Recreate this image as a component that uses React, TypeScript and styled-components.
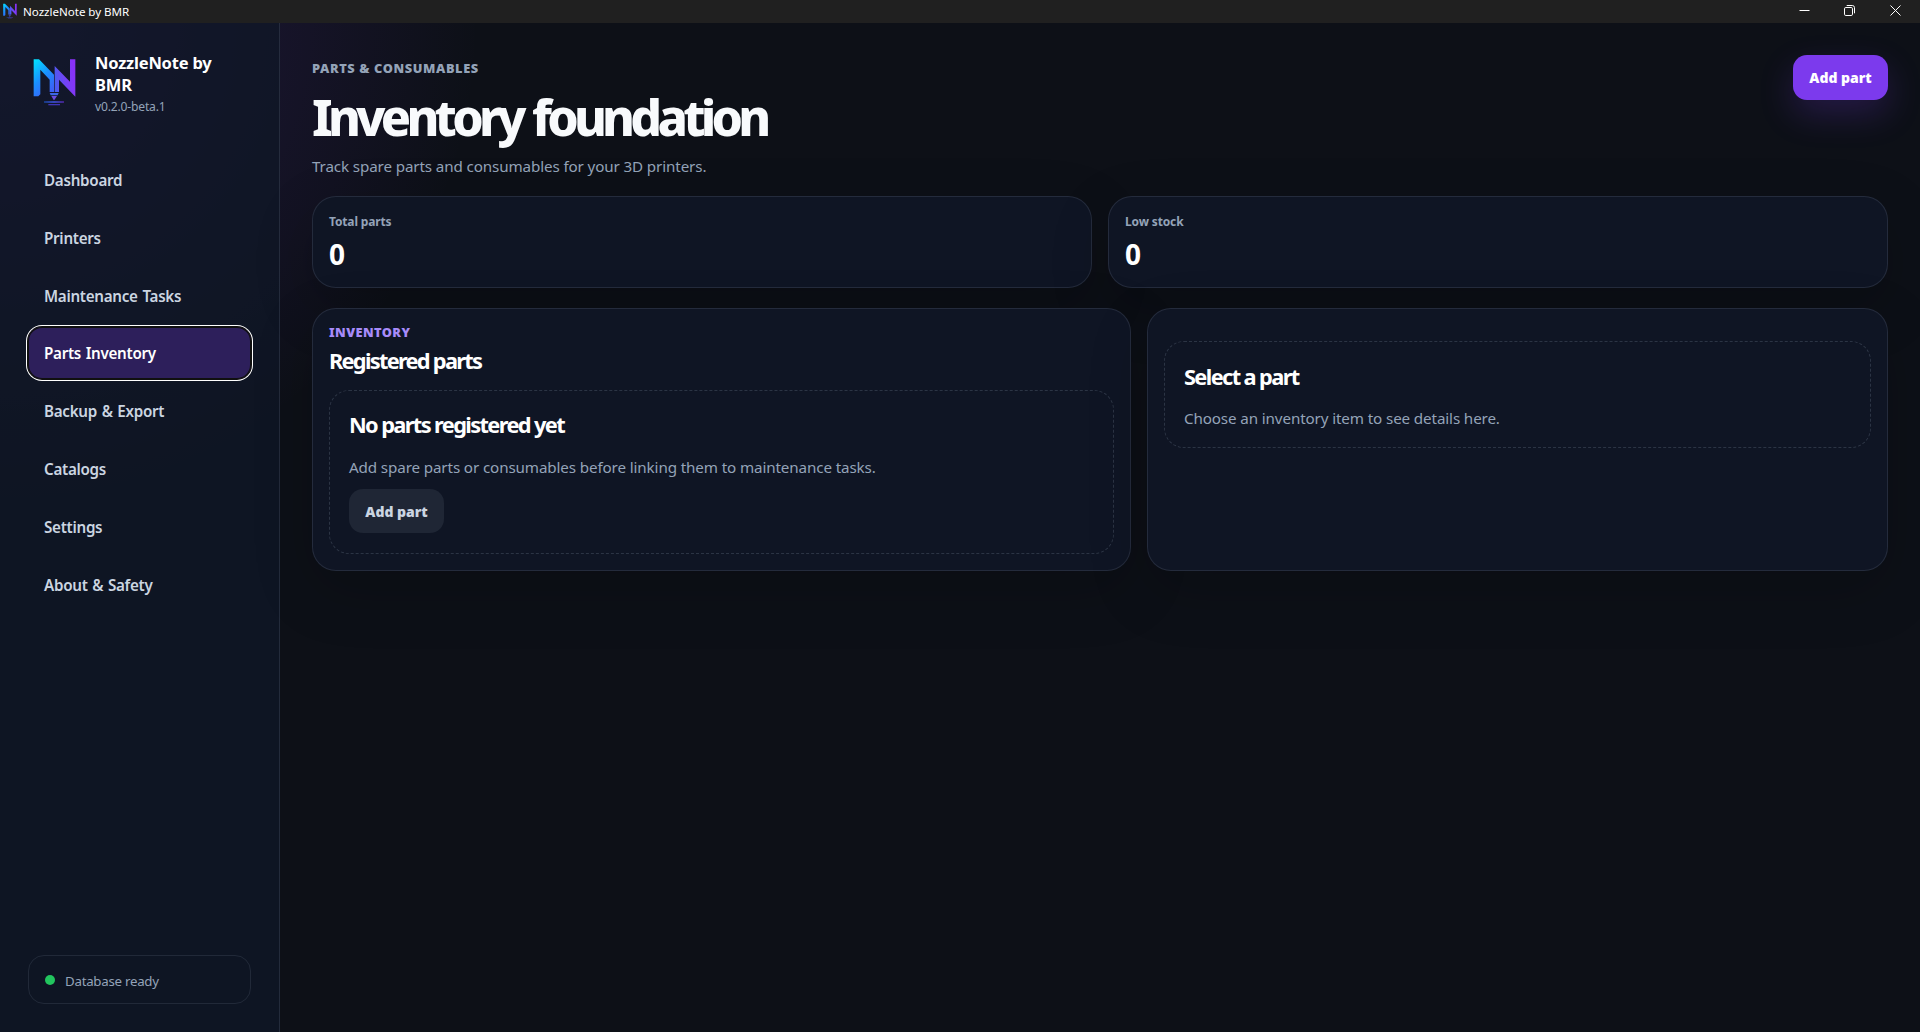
import React from "react";
import styled, { createGlobalStyle, css } from "styled-components";

const GlobalStyle = createGlobalStyle`
  *, *::before, *::after { box-sizing: border-box; }
  body {
    margin: 0;
    background: #0d1017;
    color: #f8fafc;
    font-family: "Noto Sans", "Open Sans", sans-serif;
  }
  h1, h2, h3, p { margin: 0; }
  button { font-family: inherit; border: 0; cursor: pointer; }
`;

const Window = styled.div`
  display: flex;
  flex-direction: column;
  height: 100vh;
  overflow: hidden;
`;

const TitleBar = styled.header`
  display: flex;
  align-items: center;
  flex: none;
  height: 23px;
  padding: 0 2px;
  background: #202020;
`;

const WindowTitle = styled.span`
  flex: 1;
  margin-left: 5px;
  color: #ffffff;
  font-size: 11.6px;
  line-height: 22px;
  letter-spacing: -0.03px;
`;

const WindowControls = styled.div`
  display: flex;
  align-self: flex-start;
  height: 20px;
`;

const ControlButton = styled.button`
  display: grid;
  place-items: center;
  width: 45.5px;
  padding: 0;
  background: transparent;
  color: #ffffff;
`;

const Shell = styled.div`
  display: flex;
  flex: 1;
  min-height: 0;
  background: radial-gradient(circle at top left, rgba(124, 58, 237, 0.2), transparent 30rem), #0d1017;
`;

const Sidebar = styled.aside`
  display: flex;
  flex-direction: column;
  width: 280px;
  padding: 28px;
  border-right: 1px solid rgba(148, 163, 184, 0.16);
  background: rgba(16, 23, 39, 0.78);
`;

const Brand = styled.div`
  display: flex;
  height: 102.3px;
`;

const BrandLogo = styled.svg`
  flex: none;
  width: 46px;
  height: 52px;
  margin: 6px 17px 0 4px;
`;

const BrandName = styled.div`
  padding-top: 1px;
  font-size: 16.5px;
  font-weight: 700;
  line-height: 22px;
  letter-spacing: -0.2px;
  color: #ffffff;
`;

const Version = styled.div`
  margin-top: 2px;
  font-size: 12.1px;
  line-height: 18px;
  letter-spacing: -0.18px;
  color: #94a3b8;
`;

const Nav = styled.nav`
  display: flex;
  flex-direction: column;
  gap: 6px;
`;

const NavItem = styled.button<{ $active?: boolean }>`
  height: 51.9px;
  padding: 2px 16px 0;
  border-radius: 14px;
  background: transparent;
  color: #cbd5e1;
  font-size: 15.2px;
  font-weight: 600;
  line-height: 21px;
  letter-spacing: -0.28px;
  word-spacing: 1px;
  text-align: left;
  ${({ $active }) =>
    $active &&
    css`
      background: #2d1f5b;
      color: #ffffff;
      box-shadow: inset 0 0 0 1px #101010, 0 0 0 1px #101010, 0 0 0 2px #ffffff;
    `}
`;

const StatusPill = styled.div`
  display: flex;
  align-items: center;
  gap: 10px;
  height: 49px;
  margin-top: auto;
  padding: 0 16px;
  border: 1px solid rgba(148, 163, 184, 0.14);
  border-radius: 16px;
  color: #94a3b8;
  font-size: 13.3px;
  letter-spacing: -0.27px;
`;

const StatusDot = styled.span`
  width: 10px;
  height: 10px;
  border-radius: 50%;
  background: #22c55e;
`;

const StatusText = styled.span`
  padding-top: 2px;
`;

const Main = styled.main`
  flex: 1;
  padding: 32px;
`;

const PageHeader = styled.div`
  display: flex;
  justify-content: space-between;
  align-items: flex-start;
  height: 141px;
`;

const Eyebrow = styled.p<{ $accent?: boolean }>`
  font-size: 12.8px;
  font-weight: 900;
  line-height: ${({ $accent }) => ($accent ? 16 : 20)}px;
  letter-spacing: ${({ $accent }) => ($accent ? 0.42 : 0.6)}px;
  text-transform: uppercase;
  color: ${({ $accent }) => ($accent ? "#a78bfa" : "#94a3b8")};
`;

const Heading = styled.div`
  padding-top: 3px;
`;

const PageTitle = styled.h1`
  margin: 11px 0 8px;
  font-size: 50px;
  font-weight: 800;
  line-height: 56px;
  letter-spacing: -4.75px;
  word-spacing: 2px;
`;

const Muted = styled.p`
  font-size: 15.2px;
  line-height: 26px;
  letter-spacing: -0.12px;
  color: #94a3b8;
`;

const Button = styled.button<{ $primary?: boolean }>`
  width: 95px;
  height: ${({ $primary }) => ($primary ? 45 : 44)}px;
  padding: ${({ $primary }) => ($primary ? 0 : 2)}px 0 0;
  border-radius: 14px;
  font-size: 14px;
  font-weight: 900;
  line-height: 20px;
  background: ${({ $primary }) => ($primary ? "#7c3aed" : "#1f2635")};
  color: ${({ $primary }) => ($primary ? "#ffffff" : "#cbd5e1")};
  box-shadow: ${({ $primary }) => ($primary ? "0 14px 34px rgba(124, 58, 237, 0.22)" : "none")};
`;

const surface = css`
  border: 1px solid rgba(148, 163, 184, 0.16);
  border-radius: 24px;
  background: #0f1524;
  box-shadow: 0 20px 60px rgba(0, 0, 0, 0.18);
`;

const StatGrid = styled.section`
  display: grid;
  grid-template-columns: 1fr 1fr;
  gap: 16px;
`;

const StatCard = styled.article`
  ${surface}
  height: 92px;
  padding: 16px;
`;

const StatLabel = styled.div`
  font-size: 12px;
  font-weight: 700;
  line-height: 18px;
  letter-spacing: -0.14px;
  color: #94a3b8;
`;

const StatValue = styled.div`
  margin-top: 5px;
  font-size: 28px;
  font-weight: 700;
  line-height: 36px;
  color: #ffffff;
`;

const PanelGrid = styled.section`
  display: grid;
  grid-template-columns: 1.05fr 0.95fr;
  gap: 16px;
  margin-top: 20px;
`;

const Panel = styled.article<{ $detail?: boolean }>`
  ${surface}
  height: 263px;
  padding: ${({ $detail }) => ($detail ? 32 : 15)}px 16px 16px;
`;

const PanelTitle = styled.h2`
  margin: 6px 0 14px;
  font-size: 21.8px;
  font-weight: 700;
  line-height: 30px;
  letter-spacing: -1.72px;
  color: #ffffff;
`;

const EmptyState = styled.div<{ $height: number; $top: number }>`
  height: ${({ $height }) => $height}px;
  padding: ${({ $top }) => $top}px 19px 0;
  border: 1px dashed rgba(148, 163, 184, 0.22);
  border-radius: 20px;
`;

const EmptyTitle = styled.h3<{ $gap: number }>`
  margin-bottom: ${({ $gap }) => $gap}px;
  font-size: 21.8px;
  font-weight: 700;
  line-height: 30px;
  letter-spacing: -1.62px;
  color: #ffffff;
`;

const EmptyAction = styled.div`
  margin-top: 9px;
`;

function LogoShapes({ id }: { id: string }) {
  return (
    <>
      <defs>
        <linearGradient id={`${id}-left`} x1="0" y1="0" x2="0.55" y2="1">
          <stop offset="0" stopColor="#00e5ff" />
          <stop offset="0.55" stopColor="#1a90ff" />
          <stop offset="1" stopColor="#3b62f6" />
        </linearGradient>
        <linearGradient id={`${id}-right`} x1="0" y1="0.6" x2="1" y2="0.3">
          <stop offset="0" stopColor="#4a5cf0" />
          <stop offset="0.5" stopColor="#7442f5" />
          <stop offset="1" stopColor="#8b2ff8" />
        </linearGradient>
        <linearGradient id={`${id}-line`} gradientUnits="userSpaceOnUse" x1="132" y1="0" x2="192" y2="0">
          <stop offset="0" stopColor="#173f8f" />
          <stop offset="0.5" stopColor="#3c4fd8" />
          <stop offset="1" stopColor="#4b2399" />
        </linearGradient>
      </defs>
      <path d="M101 178H117L162 224V276H149V239L121 209V283L115 289H101Z" fill={`url(#${id}-left)`} />
      <path d="M164 198L210 245V178H226V290L177 239V276H164Z" fill={`url(#${id}-right)`} />
      <path d="M149 279H176L173 286H152Z" fill="#3c66e8" />
      <path d="M154 288H171L163 300H161Z" fill="#6b4be0" />
      <rect x="132" y="303.5" width="60" height="5" fill={`url(#${id}-line)`} />
      <path d="M145 314H180" stroke="#4438c8" strokeWidth="3.5" />
    </>
  );
}

const TitleIcon = styled.svg`
  width: 16px;
  height: 16px;
  margin-bottom: 2px;
`;

const navItems = [
  "Dashboard",
  "Printers",
  "Maintenance Tasks",
  "Parts Inventory",
  "Backup & Export",
  "Catalogs",
  "Settings",
  "About & Safety",
];

const stats = [
  { label: "Total parts", value: 0 },
  { label: "Low stock", value: 0 },
];

export default function App() {
  return (
    <Window>
      <GlobalStyle />
      <TitleBar>
        <TitleIcon viewBox="92 172 144 148">
          <LogoShapes id="small" />
        </TitleIcon>
        <WindowTitle>NozzleNote by BMR</WindowTitle>
        <WindowControls>
          <ControlButton aria-label="Minimize">
            <svg width="11" height="11" viewBox="0 0 11 11" stroke="currentColor">
              <path d="M0.5 5.5H10.5" />
            </svg>
          </ControlButton>
          <ControlButton aria-label="Restore">
            <svg width="11" height="11" viewBox="0 0 11 11" fill="none" stroke="currentColor">
              <rect x="0.5" y="2.5" width="8" height="8" rx="1.3" />
              <path d="M2.7 0.5H8.3Q10.5 0.5 10.5 2.7V8.3" />
            </svg>
          </ControlButton>
          <ControlButton aria-label="Close">
            <svg width="11" height="11" viewBox="0 0 11 11" stroke="currentColor">
              <path d="M0.5 0.5L10.5 10.5M10.5 0.5L0.5 10.5" />
            </svg>
          </ControlButton>
        </WindowControls>
      </TitleBar>
      <Shell>
        <Sidebar>
          <Brand>
            <BrandLogo viewBox="96 171 138 156">
              <LogoShapes id="brand" />
            </BrandLogo>
            <div>
              <BrandName>
                NozzleNote by
                <br />
                BMR
              </BrandName>
              <Version>v0.2.0-beta.1</Version>
            </div>
          </Brand>
          <Nav>
            {navItems.map((item) => (
              <NavItem key={item} $active={item === "Parts Inventory"}>
                {item}
              </NavItem>
            ))}
          </Nav>
          <StatusPill>
            <StatusDot />
            <StatusText>Database ready</StatusText>
          </StatusPill>
        </Sidebar>
        <Main>
          <PageHeader>
            <Heading>
              <Eyebrow>Parts &amp; consumables</Eyebrow>
              <PageTitle>Inventory foundation</PageTitle>
              <Muted>Track spare parts and consumables for your 3D printers.</Muted>
            </Heading>
            <Button $primary>Add part</Button>
          </PageHeader>
          <StatGrid>
            {stats.map((stat) => (
              <StatCard key={stat.label}>
                <StatLabel>{stat.label}</StatLabel>
                <StatValue>{stat.value}</StatValue>
              </StatCard>
            ))}
          </StatGrid>
          <PanelGrid>
            <Panel>
              <Eyebrow $accent>Inventory</Eyebrow>
              <PanelTitle>Registered parts</PanelTitle>
              <EmptyState $height={164} $top={19}>
                <EmptyTitle $gap={14}>No parts registered yet</EmptyTitle>
                <Muted>Add spare parts or consumables before linking them to maintenance tasks.</Muted>
                <EmptyAction>
                  <Button>Add part</Button>
                </EmptyAction>
              </EmptyState>
            </Panel>
            <Panel $detail>
              <EmptyState $height={107} $top={20}>
                <EmptyTitle $gap={13}>Select a part</EmptyTitle>
                <Muted>Choose an inventory item to see details here.</Muted>
              </EmptyState>
            </Panel>
          </PanelGrid>
        </Main>
      </Shell>
    </Window>
  );
}
